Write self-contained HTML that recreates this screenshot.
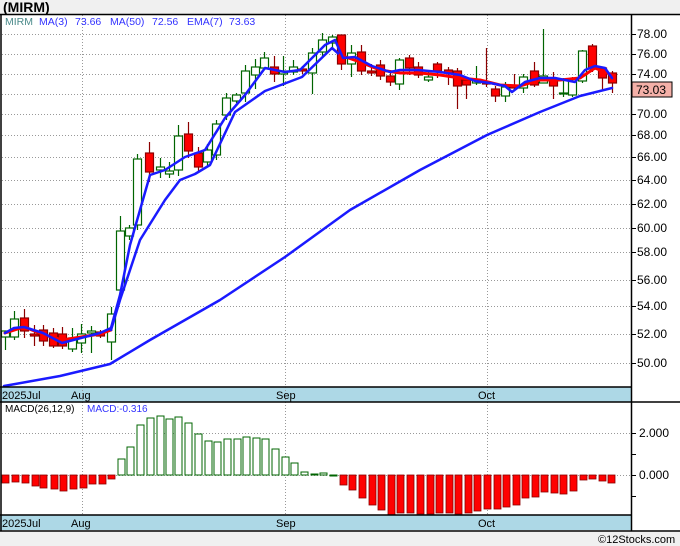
<!DOCTYPE html>
<html><head><meta charset="utf-8">
<style>
html,body{margin:0;padding:0;background:#f0f0f0;}
body{width:680px;height:546px;overflow:hidden;position:relative;font-family:"Liberation Sans",sans-serif;}
svg{position:absolute;left:0;top:0;}
</style></head>
<body>
<svg id="s" width="680" height="546" xmlns="http://www.w3.org/2000/svg" font-family="Liberation Sans, sans-serif">
<rect x="0" y="0" width="680" height="546" fill="#f0f0f0"/>
<rect x="0" y="14" width="680" height="518" fill="#fff"/>
<rect x="0" y="387" width="631" height="15" fill="#add8e6"/>
<rect x="0" y="515" width="631" height="15" fill="#add8e6"/>
<g id="grid" stroke="#999" stroke-dasharray="1,2" stroke-width="1"></g>
<g id="macd"></g>
<g id="cand"></g>
<g id="lines" fill="none" stroke-linejoin="round" stroke-linecap="round"></g>
<g stroke="#000" stroke-width="1.5" fill="none">
<line x1="0" y1="14.5" x2="680" y2="14.5"/>
<line x1="1" y1="14" x2="1" y2="531"/>
<line x1="631.5" y1="14" x2="631.5" y2="531"/>
<line x1="0" y1="387" x2="631" y2="387"/>
<line x1="0" y1="402" x2="680" y2="402"/>
<line x1="0" y1="515" x2="631" y2="515"/>
<line x1="0" y1="531" x2="680" y2="531"/>
</g>
<g id="ticks" stroke="#000"></g>
<text x="3" y="12" font-size="14" font-weight="bold" fill="#000">(MIRM)</text>
<text x="5" y="25" font-size="10.5" fill="#4a8a8a">MIRM</text>
<text x="39" y="25" font-size="10.5" fill="#3333ff">MA(3)</text>
<text x="75" y="25" font-size="10.5" fill="#3333ff">73.66</text>
<text x="110" y="25" font-size="10.5" fill="#3333ff">MA(50)</text>
<text x="152" y="25" font-size="10.5" fill="#3333ff">72.56</text>
<text x="187" y="25" font-size="10.5" fill="#3333ff">EMA(7)</text>
<text x="229" y="25" font-size="10.5" fill="#3333ff">73.63</text>
<g font-size="12" fill="#000">
<text x="637" y="38">78.00</text><text x="637" y="58">76.00</text><text x="637" y="78">74.00</text>
<text x="637" y="118">70.00</text><text x="637" y="139">68.00</text><text x="637" y="161">66.00</text>
<text x="637" y="184">64.00</text><text x="637" y="208">62.00</text><text x="637" y="232">60.00</text>
<text x="637" y="256">58.00</text><text x="637" y="284">56.00</text><text x="637" y="310">54.00</text>
<text x="637" y="338">52.00</text><text x="637" y="367">50.00</text>
<text x="639" y="437">2.000</text><text x="639" y="479">0.000</text>
</g>
<rect x="632" y="82" width="40" height="15" fill="#f4b0a8" stroke="#000"/>
<text x="636" y="94" font-size="12" fill="#000">73.03</text>
<g font-size="11" fill="#000">
<text x="2" y="399">2025Jul</text><text x="71" y="399">Aug</text><text x="276" y="399">Sep</text><text x="478" y="399">Oct</text>
<text x="2" y="527">2025Jul</text><text x="71" y="527">Aug</text><text x="276" y="527">Sep</text><text x="478" y="527">Oct</text>
</g>
<text x="5" y="412" font-size="10" fill="#000">MACD(26,12,9)</text>
<text x="87" y="412" font-size="10" fill="#3333ff">MACD:-0.316</text>
<text x="598" y="543" font-size="11" fill="#000">©12Stocks.com</text>
</svg>
<script>
var NS="http://www.w3.org/2000/svg";
function el(p,t,a){var e=document.createElementNS(NS,t);for(var k in a)e.setAttribute(k,a[k]);document.getElementById(p).appendChild(e);return e;}
[34,54,74,94,114,135,157,180,204,228,252,280,306,334,363,433,475].forEach(function(y){el("grid","line",{x1:2,y1:y+.5,x2:631,y2:y+.5});});
[82,285,487].forEach(function(x){el("grid","line",{x1:x+.5,y1:15,x2:x+.5,y2:515});});
[34,54,74,94,114,135,157,180,204,228,252,280,306,334,363,433,475,454,496].forEach(function(y){el("ticks","line",{x1:631,y1:y+.5,x2:636,y2:y+.5});});
// candles: x, top, bottom, wickTop, wickBottom, color g/r
var C=[[5,331,337,331,350,'g'],[14,319,337,311,340,'g'],[24,318,331,309,338,'r'],[34,334,336,325,346,'r'],[43,330,341,325,346,'r'],[53,333,346,328,348,'r'],[62,334,346,327,349,'r'],[72,338,349,328,352,'g'],[81,334,343,324,353,'g'],[91,331,333,326,353,'g'],[100,332,336,330,338,'r'],[111,314,342,307,360,'g'],
[120,231,290,216,295,'g'],[129,228,236,225,240,'g'],[137,159,225,154,230,'g'],[149,153,172,142,182,'r'],[160,167,170,158,178,'g'],[169,171,174,162,178,'g'],[178,136,170,125,176,'g'],[188,134,151,122,158,'r'],[198,153,167,147,172,'r'],[207,150,162,144,166,'g'],[216,124,155,120,160,'g'],
[226,98,115,93,120,'g'],[236,95,101,93,103,'g'],[245,71,93,65,102,'g'],[255,67,75,59,89,'g'],[264,58,68,52,70,'g'],[274,67,74,56,82,'r'],[283,71,74,56,86,'g'],[293,67,72,60,75,'g'],[302,69,71,66,74,'r'],[312,53,73,48,94,'g'],[322,40,52,33,56,'g'],[332,37,43,35,50,'g'],
[341,35,64,35,70,'r'],[351,53,64,45,77,'g'],[361,52,71,45,75,'r'],[371,71,73,64,76,'r'],[380,65,76,60,80,'r'],[390,76,82,70,86,'r'],[399,60,84,58,90,'g'],[409,58,68,55,75,'r'],[418,67,75,62,78,'r'],[428,77,80,72,82,'g'],[437,64,71,62,78,'r'],[448,70,73,67,85,'r'],[457,71,86,68,109,'r'],
[466,80,85,77,99,'r'],[476,80,83,66,85,'g'],[486,82,84,48,87,'r'],[495,89,96,86,102,'r'],[505,87,96,82,102,'g'],[514,86,88,74,90,'r'],[523,77,88,74,93,'g'],[534,71,85,62,87,'r'],[543,76,83,29,83,'g'],[553,79,86,72,99,'r'],[563,93,94,78,97,'g'],[572,81,95,77,97,'g'],[582,51,81,50,83,'g'],[592,46,69,44,72,'r'],[602,68,78,67,90,'r'],[612,73,83,71,93,'r']];
C.forEach(function(c){var col=c[5]=='g'?'#006400':'#8b0000';
el("cand","line",{x1:c[0]+.5,y1:c[3],x2:c[0]+.5,y2:c[4],stroke:col,"stroke-width":1.2});
el("cand","rect",{x:c[0]-3.5,y:c[1],width:8,height:Math.max(1,c[2]-c[1]),fill:c[5]=='g'?'#fff':'#f00',stroke:col,"stroke-width":1.2});});
function pl(pts,col,w){el("lines","polyline",{points:pts.map(function(p){return p.join(",")}).join(" "),stroke:col,"stroke-width":w});}
pl([[4,386],[60,376],[110,364],[150,340],[220,300],[285,257],[350,210],[420,170],[487,135],[540,112],[580,96],[612,88]],"#1a1aff",2.5);
pl([[5,333],[24,327],[45,335],[62,340],[81,337],[100,334],[111,330]],"#f00",3);
pl([[111,330],[120,300],[140,240],[165,200],[180,180],[195,174],[210,165],[235,112],[265,91],[302,77],[332,48],[340,55]],"#1a1aff",2.5);
pl([[340,55],[360,62],[380,70],[400,73],[420,73],[440,75],[460,78],[480,80],[500,85],[520,86],[540,80],[560,80],[580,78],[595,68],[612,75]],"#f00",3);
pl([[5,333],[14,328],[24,327],[43,333],[62,343],[81,338],[100,333],[111,328],[120,295],[130,245],[150,175],[165,170],[185,157],[205,150],[225,118],[245,95],[265,68],[285,72],[300,70],[325,45],[335,40],[343,58],[355,57],[372,66],[390,72],[400,70],[418,70],[440,72],[460,75],[475,81],[490,83],[505,86],[512,92],[525,82],[540,78],[555,78],[575,82],[585,70],[595,66],[605,68],[612,78]],"#1a1aff",2.5);
// macd
var R1=[[5,483],[15,482],[25,483],[35,486],[43,488],[54,489],[63,491],[73,489],[83,488],[92,484],[102,484],[111,479]];
var G=[[121,459],[130,447],[140,425],[150,418],[160,416],[169,419],[178,417],[188,423],[198,434],[208,441],[217,442],[227,439],[237,439],[246,437],[256,438],[265,439],[275,449],[285,457],[294,463],[304,472],[314,474],[323,473],[333,475]];
var R2=[[343,485],[352,490],[362,498],[372,505],[381,510],[391,515],[400,513],[410,513],[420,514],[430,514],[439,513],[449,513],[458,514],[468,513],[477,511],[487,509],[497,509],[506,507],[516,505],[525,498],[535,497],[544,492],[554,493],[563,494],[573,491],[583,480],[592,479],[602,481],[611,483]];
R1.concat(R2).forEach(function(b){el("macd","rect",{x:b[0]-3,y:475,width:7,height:b[1]-475,fill:"#f00",stroke:"#8b0000","stroke-width":0.8});});
G.forEach(function(b){el("macd","rect",{x:b[0]-3,y:b[1],width:7,height:Math.max(1,475-b[1]),fill:"#fff",stroke:"#006400","stroke-width":1});});
</script>
</body></html>
